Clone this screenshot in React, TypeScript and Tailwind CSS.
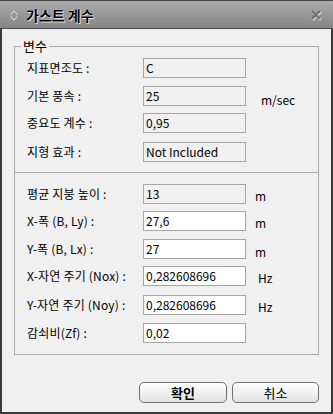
import React from "react";

const FONT = { fontFamily: '"Noto Sans CJK KR", "Noto Sans", sans-serif' };

type Row = { label: string; value: string; unit?: string; unitCls?: string; disabled?: boolean; mt: string };

const GROUP1: Row[] = [
  { label: "지표면조도 :", value: "C", disabled: true, mt: "mt-[12px]" },
  { label: "기본 풍속 :", value: "25", unit: "m/sec", unitCls: "ml-[15px] mt-[8px]", disabled: true, mt: "mt-[8px]" },
  { label: "중요도 계수 :", value: "0,95", disabled: true, mt: "mt-[7px]" },
  { label: "지형 효과 :", value: "Not Included", disabled: true, mt: "mt-[9px]" },
];

const GROUP2: Row[] = [
  { label: "평균 지붕 높이 :", value: "13", unit: "m", unitCls: "ml-[9px] mt-[3px]", disabled: true, mt: "mt-[11px]" },
  { label: "X-폭 (B, Ly) :", value: "27,6", unit: "m", unitCls: "ml-[9px] mt-[3px]", mt: "mt-[7px]" },
  { label: "Y-폭 (B, Lx) :", value: "27", unit: "m", unitCls: "ml-[9px] mt-[5px]", mt: "mt-[8px]" },
  { label: "X-자연 주기 (Nox) :", value: "0,282608696", unit: "Hz", unitCls: "ml-[12px] mt-[3px]", mt: "mt-[7px]" },
  { label: "Y-자연 주기 (Noy) :", value: "0,282608696", unit: "Hz", unitCls: "ml-[12px] mt-[3px]", mt: "mt-[9px]" },
  { label: "감쇠비(Zf) :", value: "0,02", mt: "mt-[8px]" },
];

function FieldRow({ row }: { row: Row }) {
  return (
    <div className={`flex h-[20px] items-center ${row.mt}`}>
      <span className="w-[128px] pl-[12px] text-[12px] leading-none tracking-[0.2px] text-black whitespace-nowrap">
        {row.label}
      </span>
      <div
        className={`flex h-[20px] w-[103px] items-start border border-[#a5a5a5] pl-[2px] pt-[1px] text-[12px] leading-[15px] text-black ${
          row.disabled ? "bg-[#f0f0f0]" : "bg-white"
        }`}
      >
        {row.value}
      </div>
      {row.unit && <span className={`text-[12px] leading-none text-black ${row.unitCls}`}>{row.unit}</span>}
    </div>
  );
}

export default function App() {
  return (
    <div className="flex h-[414px] w-[333px] flex-col border-x-2 border-b-2 border-[#3a3a3a] bg-[#f0f0f0]" style={FONT}>
      <div className="-mx-[2px] flex h-[29px] shrink-0 items-center border-t border-b border-[#4a4a4a] bg-[#9a9a9a] bg-linear-to-b from-[#acacac] to-[#858585] px-[10px]">
        <svg width="8" height="11" viewBox="0 0 8 11" className="mt-[1px]">
          <path d="M1 4.5 L4 1.5 L7 4.5" fill="none" stroke="#e0e0e0" strokeWidth="1.4" />
          <path d="M1 6.5 L4 9.5 L7 6.5" fill="none" stroke="#e0e0e0" strokeWidth="1.4" />
          <path d="M2 4.5 L4 2.5 L6 4.5" fill="none" stroke="#666" strokeWidth="0.8" />
          <path d="M2 6.5 L4 8.5 L6 6.5" fill="none" stroke="#666" strokeWidth="0.8" />
        </svg>
        <span
          className="ml-[8px] text-[14px] font-bold leading-none text-black"
          style={{ textShadow: "0 0 1px #fff, 1px 1px 0 #ddd" }}
        >
          가스트 계수
        </span>
        <div className="flex-1" />
        <svg width="12" height="12" viewBox="0 0 12 12" className="mr-[1px]">
          <path d="M2 2 L10 10 M10 2 L2 10" stroke="#eaeaea" strokeWidth="2.4" transform="translate(0.6 0.8)" />
          <path d="M2 2 L10 10 M10 2 L2 10" stroke="#6e6e6e" strokeWidth="2.2" />
        </svg>
      </div>

      <div className="flex flex-1 flex-col px-[12px]">
        <fieldset className="mt-[10px] h-[316px] border border-[#a8a8a8]">
          <legend className="ml-[6px] px-[2px] text-[13px] leading-[14px] text-black">변수</legend>
          <div className="-mt-[7px]">
            {GROUP1.map((r) => (
              <FieldRow key={r.label} row={r} />
            ))}
          </div>
          <div className="mt-[10px] border-t border-[#a8a8a8]" />
          {GROUP2.map((r) => (
            <FieldRow key={r.label} row={r} />
          ))}
        </fieldset>

        <div className="mt-[27px] flex justify-end gap-[5px]">
          <button className="h-[21px] w-[88px] rounded-[5px] border border-[#6f6f6f] bg-linear-to-b from-white to-[#e2e2e2] text-[13px] font-bold leading-none text-black">
            확인
          </button>
          <button className="h-[21px] w-[87px] rounded-[5px] border border-[#6f6f6f] bg-linear-to-b from-white to-[#e2e2e2] text-[13px] leading-none text-black">
            취소
          </button>
        </div>
      </div>
    </div>
  );
}
